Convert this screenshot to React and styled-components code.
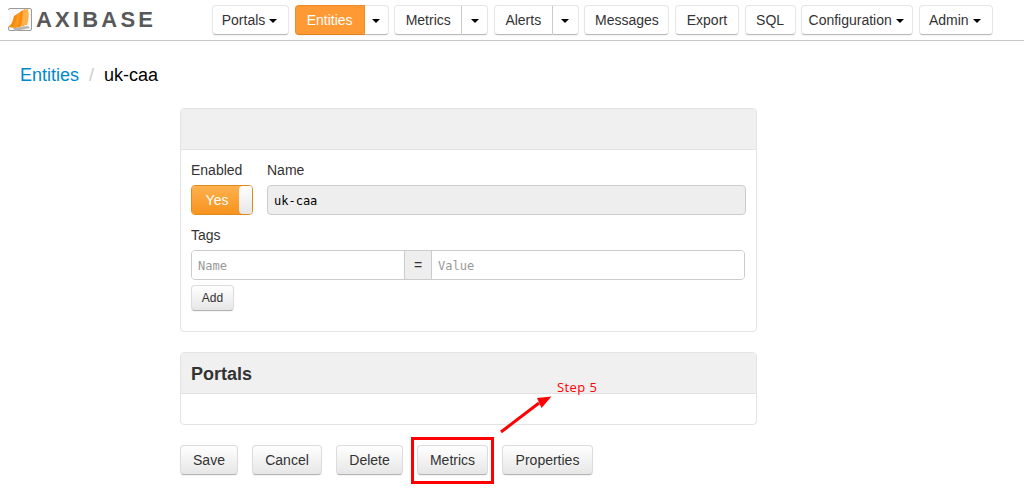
import React from 'react'
import styled, { createGlobalStyle } from 'styled-components'

const GlobalStyle = createGlobalStyle`
  html, body {
    margin: 0;
    padding: 0;
    background: #fff;
    font-family: "Liberation Sans", Arial, sans-serif;
    font-size: 14px;
    color: #333;
  }
`

function NavItem({ label, active, caret, split, width, splitWidth }) {
  if (split) {
    return (
      <SplitGroup>
        <NavButton $active={active} $width={width} $joinRight>{label}</NavButton>
        <SplitToggle $width={splitWidth}><ToggleCaret /></SplitToggle>
      </SplitGroup>
    )
  }
  return (
    <NavButton $width={width}>
      {label}
      {caret && <CaretMark />}
    </NavButton>
  )
}

function LogoMark() {
  return (
    <svg width="26" height="26" viewBox="0 0 26 26">
      <rect x="1.5" y="1.5" width="23" height="22" rx="1.5" fill="#f7f7f7" stroke="#9a9a9a" />
      <path d="M1 3v17" stroke="#fff" strokeWidth="2" />
      <path d="M6 21l15-2 2 2-15 3z" fill="#b5b5b5" />
      <path d="M1 20c4-2 5-7 6-11l5-3c0 6-1 11-3 15z" fill="#f58a0b" />
      <path d="M6 21c2-4 4-9 4-14l5-3c0 6-1 11-2 16z" fill="#fb9a1c" />
      <path d="M10 20c2-4 3-10 3-15l5-3c0 6 0 12-1 17z" fill="#f98c10" />
      <path d="M14 19c1-4 2-10 2-16l5-1c1 5 1 11-1 16z" fill="#fdb14a" />
    </svg>
  )
}

export default function App() {
  return (
    <Page>
      <GlobalStyle />
      <Header>
        <Logo>
          <LogoMark />
          <LogoText>AXIBASE</LogoText>
        </Logo>
        <Nav>
          <NavItem label="Portals" caret width={77} />
          <NavItem label="Entities" active split width={70} splitWidth={24} />
          <NavItem label="Metrics" split width={68} splitWidth={26} />
          <NavItem label="Alerts" split width={59} splitWidth={26} />
          <NavItem label="Messages" width={85} />
          <NavItem label="Export" width={64} />
          <NavItem label="SQL" width={51} />
          <NavItem label="Configuration" caret width={112} />
          <NavItem label="Admin" caret width={74} />
        </Nav>
      </Header>

      <Breadcrumb>
        <CrumbLink>Entities</CrumbLink>
        <CrumbDivider>/</CrumbDivider>
        <CrumbCurrent>uk-caa</CrumbCurrent>
      </Breadcrumb>

      <Content>
        <Panel>
          <PanelHeading />
          <PanelBody>
            <TopRow>
              <EnabledField>
                <FieldLabel>Enabled</FieldLabel>
                <Toggle>
                  <ToggleOn>Yes</ToggleOn>
                  <ToggleKnob />
                </Toggle>
              </EnabledField>
              <NameField>
                <FieldLabel>Name</FieldLabel>
                <NameInput readOnly value="uk-caa" />
              </NameField>
            </TopRow>
            <FieldLabel>Tags</FieldLabel>
            <TagGroup>
              <TagInput $first placeholder="Name" />
              <TagEquals>=</TagEquals>
              <TagInput placeholder="Value" />
            </TagGroup>
            <SmallButton>Add</SmallButton>
          </PanelBody>
        </Panel>

        <PortalsPanel>
          <PanelHeading>
            <PanelTitle>Portals</PanelTitle>
          </PanelHeading>
          <EmptyBody />
        </PortalsPanel>

        <Actions>
          <ActionButton $width={58}>Save</ActionButton>
          <ActionButton $width={70}>Cancel</ActionButton>
          <ActionButton $width={67}>Delete</ActionButton>
          <ActionButton $width={71}>Metrics</ActionButton>
          <ActionButton $width={91}>Properties</ActionButton>
        </Actions>
      </Content>

      <Highlight />
      <Arrow width="60" height="44" viewBox="0 0 60 44">
        <path d="M1 41 L39 12" stroke="#f00" strokeWidth="3" fill="none" />
        <path d="M51.5 5.5 L37 7 L41.5 17 z" fill="#f00" />
      </Arrow>
      <StepNote>Step 5</StepNote>
    </Page>
  )
}

const Page = styled.div`
  position: relative;
  width: 1024px;
  height: 499px;
  overflow: hidden;
`

const Header = styled.header`
  display: flex;
  align-items: flex-start;
  height: 40px;
  border-bottom: 1px solid #c8c8c8;
`

const Logo = styled.div`
  display: flex;
  align-items: center;
  gap: 3px;
  width: 212px;
  height: 40px;
  padding-left: 7px;
  box-sizing: border-box;
`

const LogoText = styled.span`
  font-size: 22px;
  font-weight: bold;
  letter-spacing: 3.2px;
  color: #58595b;
`

const Nav = styled.nav`
  display: flex;
  gap: 5.6px;
  padding-top: 5px;
`

const SplitGroup = styled.div`
  display: flex;
`

const NavButton = styled.button`
  box-sizing: border-box;
  width: ${(p) => p.$width}px;
  height: 30px;
  padding: 0;
  font: 14px "Liberation Sans", Arial, sans-serif;
  color: ${(p) => (p.$active ? '#fff' : '#333')};
  background: ${(p) => (p.$active ? '#ff9933' : '#fff')};
  border: 1px solid ${(p) => (p.$active ? '#f28c28' : '#e6e6e6')};
  border-bottom-color: ${(p) => (p.$active ? '#e0841f' : '#b9b9b9')};
  border-right-color: ${(p) => (p.$joinRight && !p.$active ? '#ccc' : '')};
  border-radius: ${(p) => (p.$joinRight ? '4px 0 0 4px' : '4px')};
  box-shadow: 0 1px 1px rgba(0, 0, 0, 0.05);
`

const SplitToggle = styled.button`
  box-sizing: border-box;
  width: ${(p) => p.$width}px;
  height: 30px;
  padding: 0;
  background: #fff;
  border: 1px solid #e6e6e6;
  border-left: none;
  border-bottom-color: #b9b9b9;
  border-radius: 0 4px 4px 0;
  box-shadow: 0 1px 1px rgba(0, 0, 0, 0.05);
`

const CaretMark = styled.span`
  display: inline-block;
  width: 0;
  height: 0;
  margin-left: 4px;
  margin-right: 2px;
  vertical-align: middle;
  border-top: 4px solid #000;
  border-left: 4px solid transparent;
  border-right: 4px solid transparent;
`

const ToggleCaret = styled(CaretMark)`
  margin: 0;
`

const Breadcrumb = styled.div`
  display: flex;
  align-items: center;
  height: 22px;
  margin-top: 23px;
  padding-left: 20px;
  font-size: 18px;
`

const CrumbLink = styled.a`
  color: #0088cc;
`

const CrumbDivider = styled.span`
  margin: 0 10px;
  color: #ccc;
`

const CrumbCurrent = styled.span`
  color: #000;
`

const Content = styled.main`
  width: 577px;
  margin: 22px 0 0 180px;
`

const Panel = styled.section`
  box-sizing: border-box;
  height: 224px;
  border: 1px solid #e3e3e3;
  border-radius: 4px;
  overflow: hidden;
`

const PortalsPanel = styled(Panel)`
  height: 73px;
  margin-top: 20px;
`

const PanelHeading = styled.div`
  box-sizing: border-box;
  display: flex;
  align-items: center;
  height: 41px;
  padding: 2px 10px 0;
  background: #f0f0f0;
  border-bottom: 1px solid #e3e3e3;
`

const PanelTitle = styled.h3`
  margin: 0;
  font-size: 18px;
  font-weight: bold;
  color: #333;
`

const PanelBody = styled.div`
  padding: 12px 10px 0;
`

const EmptyBody = styled.div`
  height: 30px;
`

const TopRow = styled.div`
  display: flex;
  gap: 14px;
  margin-bottom: 12px;
`

const EnabledField = styled.div`
  width: 62px;
`

const NameField = styled.div`
  flex: 1;
`

const FieldLabel = styled.div`
  height: 16px;
  margin-bottom: 7px;
  font-size: 14px;
  line-height: 16px;
  color: #333;
`

const Toggle = styled.div`
  box-sizing: border-box;
  display: flex;
  width: 62px;
  height: 30px;
  border: 1px solid #e08a1e;
  border-radius: 4px;
  overflow: hidden;
`

const ToggleOn = styled.div`
  flex: 1;
  font-size: 14px;
  line-height: 28px;
  text-align: center;
  color: #fff;
  background: linear-gradient(#fdb14e, #f7931e);
`

const ToggleKnob = styled.div`
  width: 13px;
  margin-left: -3px;
  background: linear-gradient(#fff, #e6e6e6);
  border-radius: 4px 0 0 4px;
`

const NameInput = styled.input`
  box-sizing: border-box;
  display: block;
  width: 479px;
  height: 30px;
  padding: 1px 6px 0;
  font: 12px "DejaVu Sans Mono", "Liberation Mono", monospace;
  color: #000;
  background: #eeeeee;
  border: 1px solid #ccc;
  border-radius: 4px;
  outline: none;
`

const TagGroup = styled.div`
  box-sizing: border-box;
  display: flex;
  width: 554px;
  height: 30px;
  margin-bottom: 5px;
  border: 1px solid #ccc;
  border-radius: 4px;
  overflow: hidden;
`

const TagInput = styled.input`
  box-sizing: border-box;
  flex: ${(p) => (p.$first ? '0 0 212px' : '1')};
  min-width: 0;
  height: 28px;
  padding: 1px 6px 0;
  font: 12px "DejaVu Sans Mono", "Liberation Mono", monospace;
  color: #333;
  border: none;
  outline: none;

  &::placeholder {
    color: #999;
    opacity: 1;
  }
`

const TagEquals = styled.div`
  box-sizing: border-box;
  width: 28px;
  font-size: 14px;
  line-height: 28px;
  text-align: center;
  background: #eeeeee;
  border-left: 1px solid #ccc;
  border-right: 1px solid #ccc;
`

const GradientButton = styled.button`
  box-sizing: border-box;
  padding: 0;
  font: 14px "Liberation Sans", Arial, sans-serif;
  color: #333;
  background: linear-gradient(#fff, #e6e6e6);
  border: 1px solid #dcdcdc;
  border-bottom-color: #b3b3b3;
  border-radius: 4px;
  box-shadow: 0 1px 1px rgba(0, 0, 0, 0.05);
`

const SmallButton = styled(GradientButton)`
  display: block;
  width: 43px;
  height: 26px;
  font-size: 12px;
`

const Actions = styled.div`
  display: flex;
  gap: 14px;
  margin-top: 20px;
`

const ActionButton = styled(GradientButton)`
  width: ${(p) => p.$width}px;
  height: 30px;
`

const Highlight = styled.div`
  position: absolute;
  left: 411px;
  top: 437px;
  box-sizing: border-box;
  width: 83px;
  height: 47px;
  border: 3px solid #f00;
`

const Arrow = styled.svg`
  position: absolute;
  left: 500px;
  top: 391px;
`

const StepNote = styled.div`
  position: absolute;
  left: 557px;
  top: 378px;
  font: 13px "Open Sans", sans-serif;
  letter-spacing: 0.4px;
  color: #f00;
`
